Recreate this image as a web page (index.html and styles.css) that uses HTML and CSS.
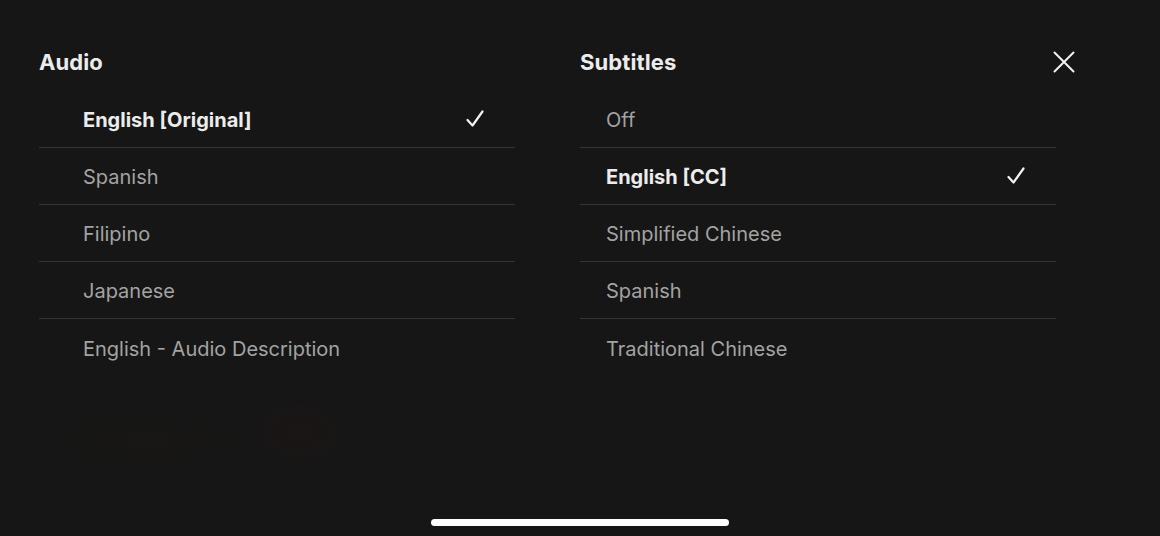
FILE: index.html
```html
<!DOCTYPE html>
<html>
<head>
<meta charset="utf-8">
<link rel="stylesheet" href="styles.css">
</head>
<body>
<div class="screen">
  <div class="panel">
    <section class="col col-audio">
      <h2 class="heading">Audio</h2>
      <ul class="list">
        <li class="item selected"><span>English [Original]</span>
          <svg class="check" viewBox="0 0 20 20" width="20" height="20"><path d="M2.5 11 L7.5 16.5 L17.5 2.5" fill="none" stroke="#f2f2f2" stroke-width="2.2" stroke-linecap="round" stroke-linejoin="round"/></svg></li>
        <li class="item"><span>Spanish</span></li>
        <li class="item"><span>Filipino</span></li>
        <li class="item"><span>Japanese</span></li>
        <li class="item"><span>English - Audio Description</span></li>
      </ul>
    </section>
    <section class="col col-subs">
      <h2 class="heading">Subtitles</h2>
      <ul class="list">
        <li class="item"><span>Off</span></li>
        <li class="item selected"><span>English [CC]</span>
          <svg class="check" viewBox="0 0 20 20" width="20" height="20"><path d="M2.5 11 L7.5 16.5 L17.5 2.5" fill="none" stroke="#f2f2f2" stroke-width="2.2" stroke-linecap="round" stroke-linejoin="round"/></svg></li>
        <li class="item"><span>Simplified Chinese</span></li>
        <li class="item"><span>Spanish</span></li>
        <li class="item"><span>Traditional Chinese</span></li>
      </ul>
    </section>
  </div>
  <button class="close" aria-label="Close">
    <svg viewBox="0 0 22 22" width="22" height="22"><path d="M1.5 1.5 L20.5 20.5 M20.5 1.5 L1.5 20.5" stroke="#f2f2f2" stroke-width="2" stroke-linecap="round"/></svg>
  </button>
  <div class="home-indicator"></div>
</div>
</body>
</html>
```

FILE: styles.css
```css
* { box-sizing: border-box; }
html, body {
  margin: 0;
  padding: 0;
  width: 1160px;
  height: 536px;
  overflow: hidden;
}
body {
  background: #161616;
  font-family: Inter, "Noto Sans", "Liberation Sans", sans-serif;
  color: #a3a3a3;
}
.screen {
  position: relative;
  width: 1160px;
  height: 536px;
  background:
    radial-gradient(ellipse 50px 35px at 300px 432px, rgba(50, 18, 18, 0.22), transparent),
    radial-gradient(ellipse 120px 35px at 150px 440px, rgba(35, 25, 20, 0.15), transparent),
    #161616;
}
.panel {
  display: flex;
  gap: 65px;
  padding: 47px 0 0 39px;
}
.col {
  width: 476px;
}
.heading {
  margin: 0;
  height: 30px;
  line-height: 30px;
  font-size: 22px;
  font-weight: 700;
  color: #ececec;
  letter-spacing: 0.1px;
}
.list {
  list-style: none;
  margin: 14px 0 0;
  padding: 0;
}
.item {
  display: flex;
  align-items: center;
  justify-content: space-between;
  height: 57px;
  border-bottom: 1px solid #343434;
  font-size: 20px;
  padding-top: 2px;
  padding-right: 30px;
}
.item:last-child { border-bottom: none; }
.col-audio .item { padding-left: 44px; }
.col-subs .item { padding-left: 26px; }
.item.selected {
  color: #ececec;
  font-weight: 700;
}
.check { display: block; margin-top: -2px; }
.close {
  position: absolute;
  left: 1053px;
  top: 51px;
  width: 22px;
  height: 22px;
  padding: 0;
  border: none;
  background: none;
}
.close svg { display: block; }
.home-indicator {
  position: absolute;
  left: 431px;
  top: 519px;
  width: 298px;
  height: 7px;
  border-radius: 4px;
  background: #ffffff;
}
```
